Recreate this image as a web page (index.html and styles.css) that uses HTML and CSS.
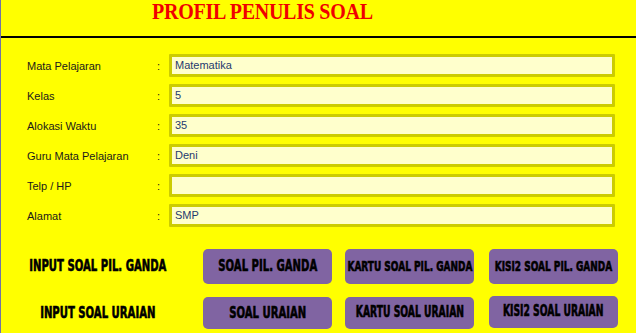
FILE: index.html
```html
<!DOCTYPE html>
<html>
<head>
<meta charset="utf-8">
<title>Profil Penulis Soal</title>
<link rel="stylesheet" href="styles.css">
</head>
<body>
<div class="page">
  <header class="header">
    <h1 class="title">PROFIL PENULIS SOAL</h1>
  </header>
  <div class="rule"></div>

  <form class="form">
    <div class="row"><span class="label">Mata Pelajaran</span><span class="colon">:</span><div class="field">Matematika</div></div>
    <div class="row"><span class="label">Kelas</span><span class="colon">:</span><div class="field">5</div></div>
    <div class="row"><span class="label">Alokasi Waktu</span><span class="colon">:</span><div class="field">35</div></div>
    <div class="row"><span class="label">Guru Mata Pelajaran</span><span class="colon">:</span><div class="field">Deni</div></div>
    <div class="row"><span class="label">Telp / HP</span><span class="colon">:</span><div class="field"></div></div>
    <div class="row"><span class="label">Alamat</span><span class="colon">:</span><div class="field">SMP</div></div>
  </form>

  <section class="actions">
    <div class="act-row act-row-1">
      <div class="act-label"><span class="imp">INPUT SOAL PIL. GANDA</span></div>
      <div class="btn btn-a"><span class="imp">SOAL PIL. GANDA</span></div>
      <div class="btn btn-b"><span class="imp imp-sm">KARTU SOAL PIL. GANDA</span></div>
      <div class="btn btn-c"><span class="imp imp-sm">KISI2 SOAL PIL. GANDA</span></div>
    </div>
    <div class="act-row act-row-2">
      <div class="act-label"><span class="imp">INPUT SOAL URAIAN</span></div>
      <div class="btn btn-a"><span class="imp">SOAL URAIAN</span></div>
      <div class="btn btn-b"><span class="imp imp-md">KARTU SOAL URAIAN</span></div>
      <div class="btn btn-c btn-up"><span class="imp imp-md">KISI2 SOAL URAIAN</span></div>
    </div>
  </section>
</div>
</body>
</html>
```

FILE: styles.css
```css
html, body {
  margin: 0;
  padding: 0;
  background: #ffff00;
}

.page {
  width: 635px;
  height: 333px;
  border-left: 1px solid #7373a3;
  background: #ffff00;
  overflow: hidden;
  font-family: "Liberation Sans", Arial, sans-serif;
}

.header {
  height: 36px;
}

.title {
  display: inline-block;
  margin: 0 0 0 151px;
  font-family: "Liberation Serif", "Times New Roman", serif;
  font-weight: bold;
  font-size: 23px;
  line-height: 23px;
  color: #f00000;
  letter-spacing: -0.3px;
  transform: scaleX(0.87);
  transform-origin: left center;
  white-space: nowrap;
}

.rule {
  height: 2px;
  background: #000;
}

.form {
  margin: 16px 0 0 0;
  display: flex;
  flex-direction: column;
  gap: 7px;
}

.row {
  display: flex;
  align-items: center;
  height: 23px;
}

.label {
  width: 130px;
  margin-left: 26px;
  font-size: 11px;
  color: #1a1a1a;
}

.colon {
  width: 12px;
  font-size: 11px;
  color: #1a1a1a;
}

.field {
  box-sizing: border-box;
  width: 446px;
  height: 23px;
  border: 3px solid #cccc00;
  border-radius: 1px;
  background: #ffffcc;
  padding-left: 3px;
  font-size: 11px;
  line-height: 17px;
  color: #1f3a6e;
}

.actions {
  margin-top: 22px;
  display: flex;
  flex-direction: column;
  gap: 13px;
}

.act-row {
  display: flex;
  align-items: center;
}

.act-row-1 { height: 35px; }
.act-row-2 { height: 32px; }

.act-label {
  width: 194px;
  display: flex;
  justify-content: center;
  align-items: center;
  height: 100%;
}

.btn {
  width: 129px;
  height: 100%;
  background: #8064a2;
  border-radius: 5px;
  display: flex;
  justify-content: center;
  align-items: center;
  overflow: visible;
}

.btn-a { margin-left: 8px; }
.btn-b { margin-left: 13px; }
.btn-c { margin-left: 15px; }
.btn-up { position: relative; top: -1px; }

.imp {
  display: inline-block;
  white-space: nowrap;
  font-family: "DejaVu Sans Condensed", "DejaVu Sans", sans-serif;
  font-stretch: condensed;
  font-weight: bold;
  font-size: 16.5px;
  line-height: 1;
  color: #000;
  transform: scaleX(0.68);
  -webkit-text-stroke: 0.6px #000;
}

.imp-sm {
  font-size: 14.7px;
}

.imp-md {
  font-size: 15.5px;
  transform: scaleX(0.66);
}
```
